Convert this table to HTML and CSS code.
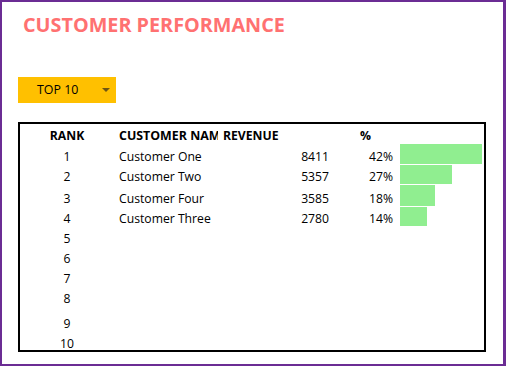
FILE: index.html
```html
<!DOCTYPE html>
<html lang="en">
<head>
<meta charset="utf-8">
<title>Customer Performance</title>
<link rel="stylesheet" href="styles.css">
</head>
<body>
<div class="frame">
  <h1 class="title">CUSTOMER PERFORMANCE</h1>
  <div class="dropdown">
    <span class="dropdown-label">TOP 10</span>
    <span class="caret"></span>
  </div>
  <div class="table">
    <div class="row row-h20 head">
      <div class="c-rank">RANK</div>
      <div class="c-name">CUSTOMER NAME</div>
      <div class="c-rev head-rev">REVENUE</div>
      <div class="c-pct head-pct">%</div>
      <div class="c-bar"></div>
    </div>
    <div class="row row-h21">
      <div class="c-rank">1</div>
      <div class="c-name">Customer One</div>
      <div class="c-rev">8411</div>
      <div class="c-pct">42%</div>
      <div class="c-bar"><div class="bar" style="width:82px"></div></div>
    </div>
    <div class="row row-h20">
      <div class="c-rank">2</div>
      <div class="c-name">Customer Two</div>
      <div class="c-rev">5357</div>
      <div class="c-pct">27%</div>
      <div class="c-bar"><div class="bar" style="width:52px"></div></div>
    </div>
    <div class="row row-h22">
      <div class="c-rank">3</div>
      <div class="c-name">Customer Four</div>
      <div class="c-rev">3585</div>
      <div class="c-pct">18%</div>
      <div class="c-bar"><div class="bar" style="width:35px"></div></div>
    </div>
    <div class="row row-h20">
      <div class="c-rank">4</div>
      <div class="c-name">Customer Three</div>
      <div class="c-rev">2780</div>
      <div class="c-pct">14%</div>
      <div class="c-bar"><div class="bar" style="width:27px"></div></div>
    </div>
    <div class="row row-h20"><div class="c-rank">5</div></div>
    <div class="row row-h20"><div class="c-rank">6</div></div>
    <div class="row row-h20"><div class="c-rank">7</div></div>
    <div class="row row-h20"><div class="c-rank">8</div></div>
    <div class="row row-h25"><div class="c-rank">9</div></div>
    <div class="row row-last"><div class="c-rank">10</div></div>
  </div>
</div>
</body>
</html>
```

FILE: styles.css
```css
html, body {
  margin: 0;
  padding: 0;
  background: #ffffff;
}

.frame {
  box-sizing: border-box;
  width: 506px;
  height: 366px;
  border-style: solid;
  border-color: #6b2c94;
  border-width: 2px 3px 2px 2px;
  font-family: "Open Sans", "DejaVu Sans", sans-serif;
  color: #000;
  overflow: hidden;
}

.title {
  margin: 0;
  padding: 11px 0 0 21px;
  font-size: 19.8px;
  line-height: 24px;
  font-weight: 700;
  color: #ff7171;
}

.dropdown {
  margin: 40px 0 0 16px;
  width: 98px;
  height: 26px;
  background: #ffc000;
  display: flex;
  align-items: center;
  font-size: 12.4px;
}

.dropdown-label {
  padding-left: 19px;
  line-height: 16px;
}

.caret {
  margin-left: 24px;
  width: 0;
  height: 0;
  border-left: 4px solid transparent;
  border-right: 4px solid transparent;
  border-top: 4px solid #6e5613;
}

.table {
  box-sizing: border-box;
  margin: 19px 0 0 16px;
  width: 468px;
  height: 230px;
  border: 2px solid #000;
  font-size: 12.2px;
  line-height: 16px;
}

.row {
  display: flex;
  align-items: stretch;
}

.row-h20 { height: 20px; }
.row-h21 { height: 21px; }
.row-h22 { height: 22px; }
.row-h25 { height: 25px; }
.row-last { height: 18px; }

.row > div {
  display: flex;
  align-items: flex-end;
  box-sizing: border-box;
  white-space: nowrap;
}

.row-last > div {
  margin-bottom: -2px;
}

.head { font-weight: 700; }

.head .c-name {
  font-size: 12.4px;
}

.c-rank {
  width: 94px;
  justify-content: center;
}

.c-name {
  width: 104px;
  padding-left: 5px;
  overflow: hidden;
}

.c-rev {
  width: 115px;
  justify-content: flex-end;
  padding-right: 4px;
}

.c-pct {
  width: 64px;
  justify-content: flex-end;
  padding-right: 4px;
}

.head-rev {
  justify-content: flex-start;
  padding-left: 5px;
}

.head-pct {
  justify-content: flex-start;
  padding-left: 27px;
}

.row > .c-bar {
  flex: 1;
  padding: 0 0 1px 3px;
  align-items: stretch;
}

.bar {
  background: #90ee90;
}
```
